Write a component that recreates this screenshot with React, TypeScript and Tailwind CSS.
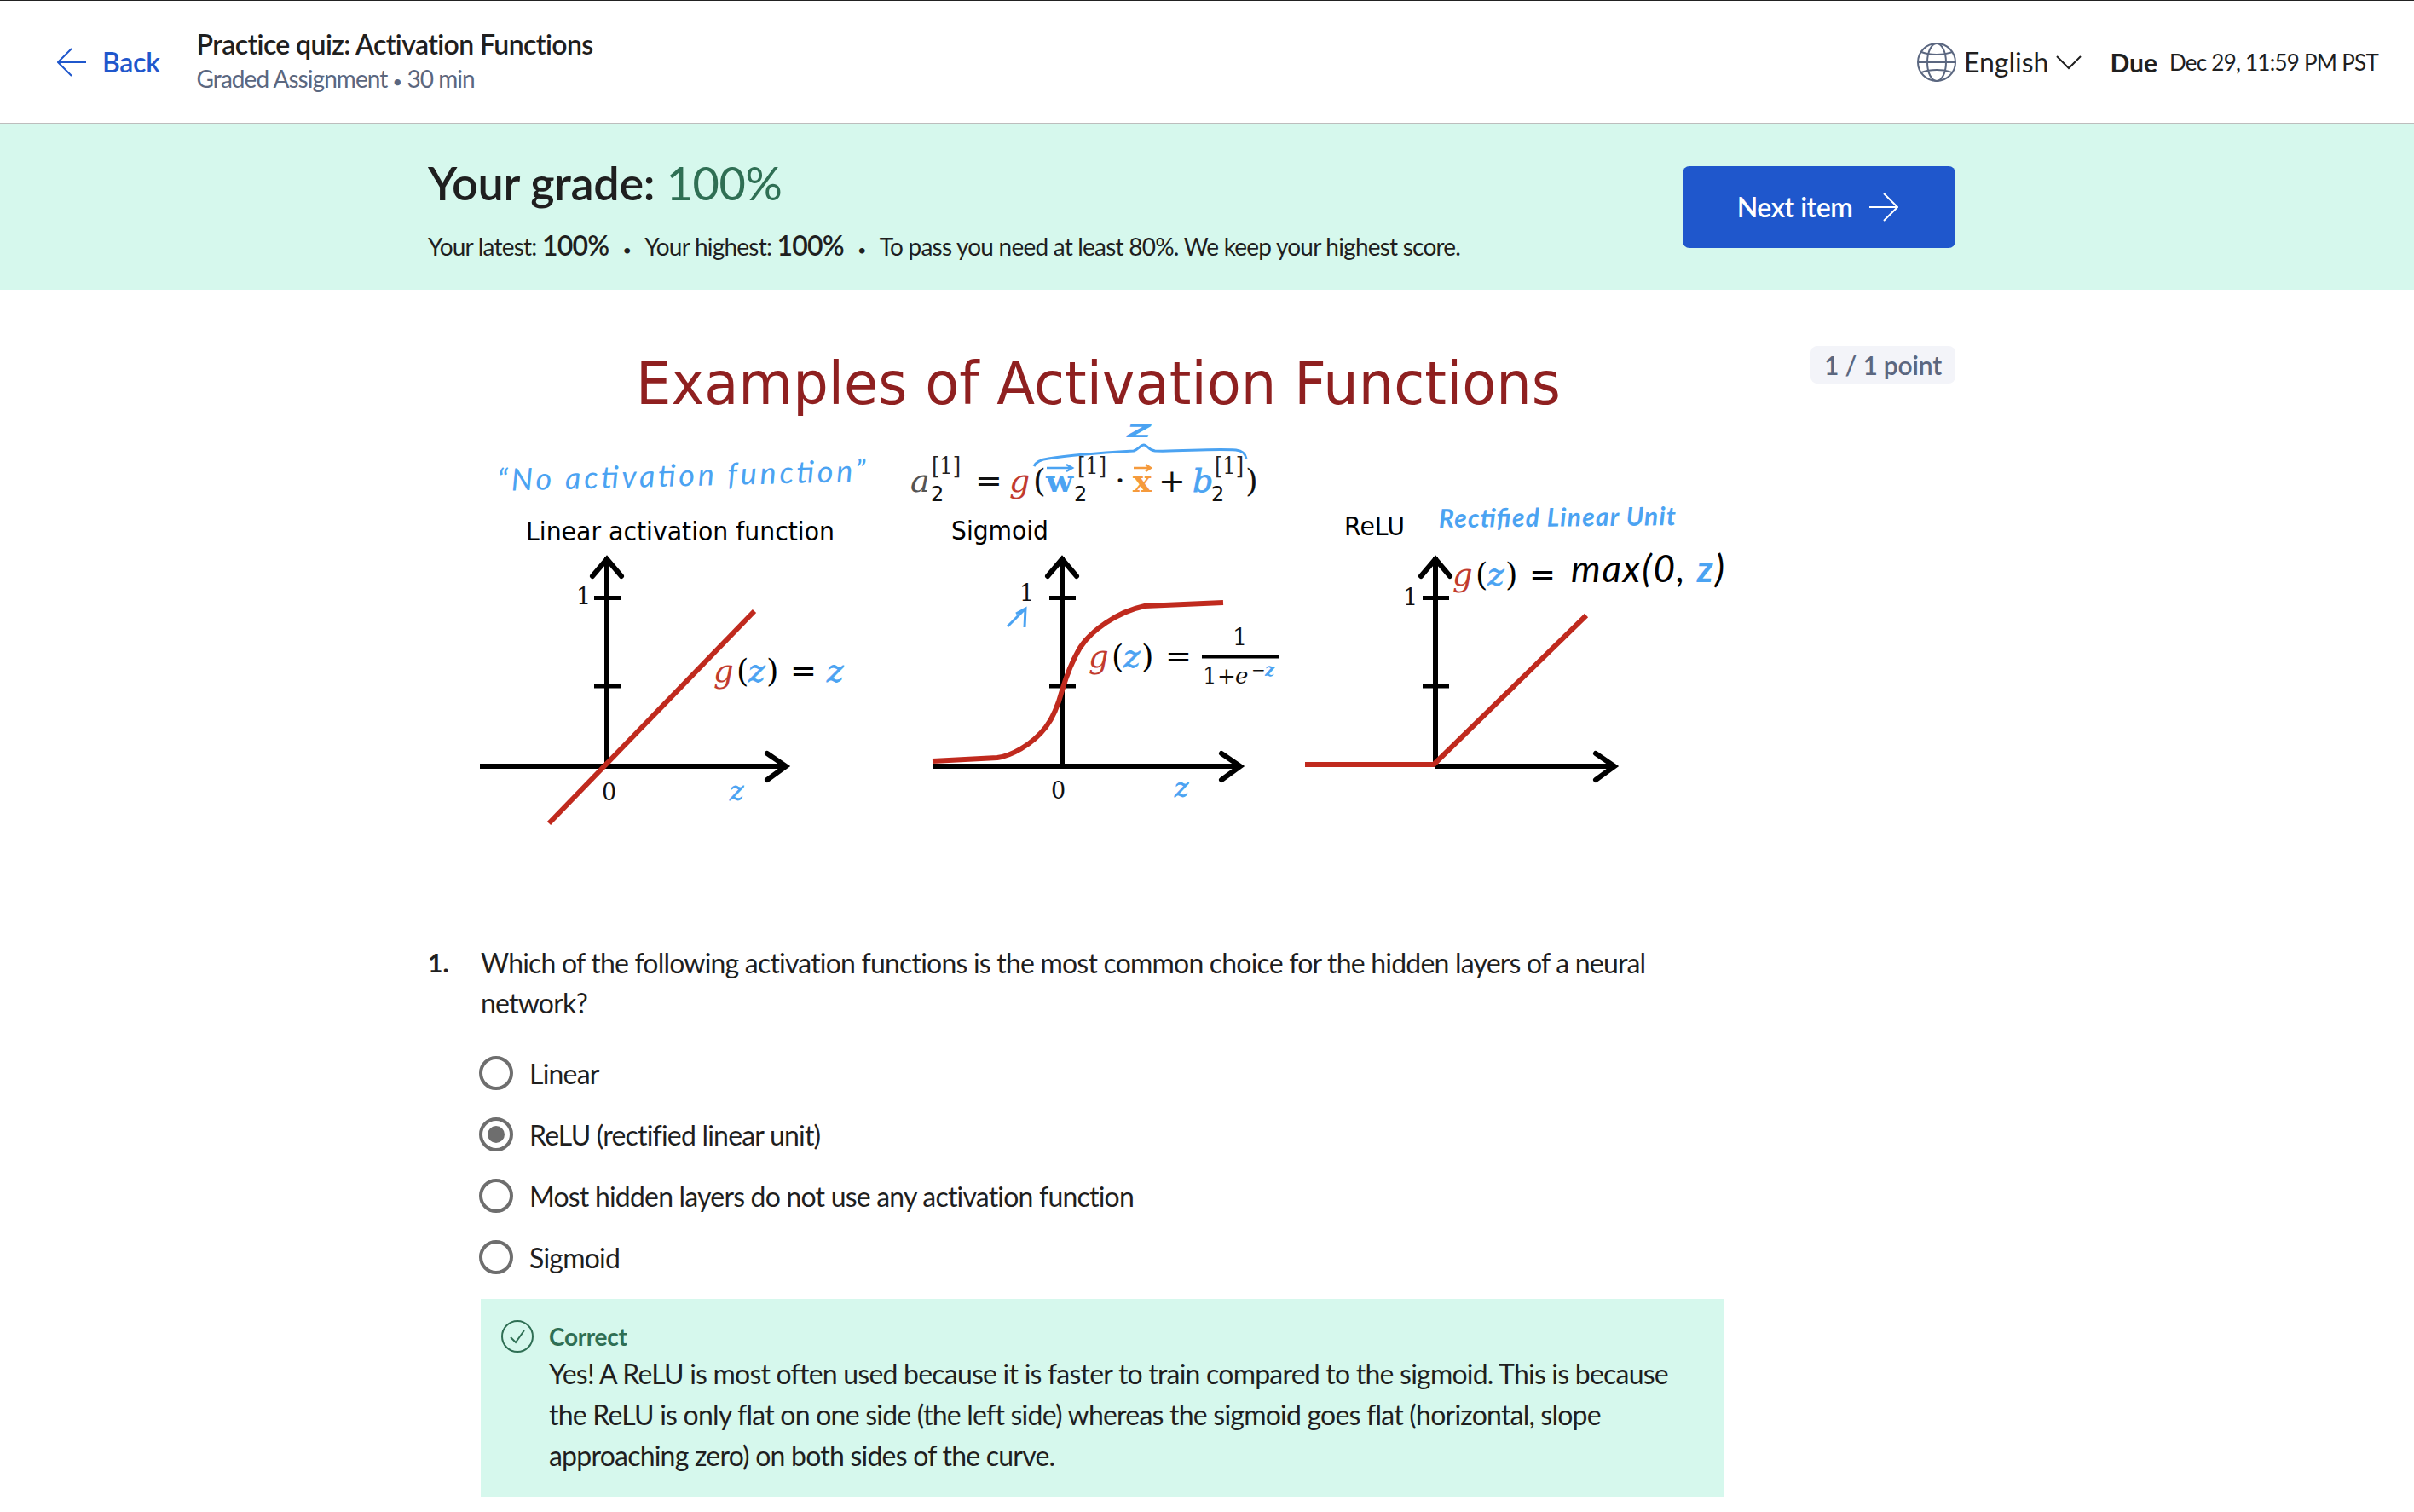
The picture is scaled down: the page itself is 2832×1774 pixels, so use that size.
const sans = "font-['Lato','Liberation_Sans',sans-serif]";
const mathFont = "font-['DejaVu_Serif',serif]";
const red = "italic fill-[#c23b2e]";
const blue = "italic fill-[#4ba3f2] stroke-[#4ba3f2] stroke-[0.8px]";

function Axes({ x }: { x: number }) {
  return (
    <g fill="none" stroke="#000" strokeWidth={6}>
      <path d={`M${x} 654V899`} />
      <path d={`M${x - 17} 676L${x} 656L${x + 17} 676`} strokeLinecap="round" strokeLinejoin="miter" />
      <path d={`M${x - 15} 701.5H${x + 16}M${x - 15} 805H${x + 16}`} strokeWidth={5} />
    </g>
  );
}

function HAxis({ from, to }: { from: number; to: number }) {
  return (
    <g fill="none" stroke="#000" strokeWidth={6}>
      <path d={`M${from} 899H${to - 3}`} />
      <path d={`M${to - 25} 884L${to - 3} 899L${to - 25} 915`} strokeLinecap="round" />
    </g>
  );
}

function Gz({ x, y }: { x: number; y: number }) {
  return (
    <text y={y} className={`${mathFont} text-[37px] fill-black`}>
      <tspan x={x} className={red}>g</tspan>
      <tspan x={x + 27}>(</tspan>
      <tspan x={x + 41} className={blue}>z</tspan>
      <tspan x={x + 62}>)</tspan>
      <tspan x={x + 90}>=</tspan>
    </text>
  );
}

function Figure() {
  const dj = "font-['DejaVu_Sans',sans-serif]";
  const hand = "font-['Lato',sans-serif] italic";
  const digit = `${mathFont} fill-[#111] text-[27px]`;
  const sup = `${mathFont} fill-[#222] text-[27px]`;
  const sub = `${dj} fill-[#111] text-[24px]`;
  const eq = `${mathFont} fill-[#111] text-[38px]`;
  return (
    <svg viewBox="502 406 1538 600" width={1538} height={600} className="block shrink-0">
      <text x={746} y={474} textLength={1085} lengthAdjust="spacingAndGlyphs" className={`${dj} fill-[#8f2020] text-[69px]`}>Examples of Activation Functions</text>

      {/* Chart 1 */}
      <text x={584} y={576} textLength={432} lengthAdjust="spacing" transform="rotate(-1.5 584 576)" className={`${hand} fill-[#4ba3f2] text-[36px]`}>“No activation function”</text>
      <text x={617} y={634} textLength={362} lengthAdjust="spacingAndGlyphs" className={`${dj} fill-black text-[31px]`}>Linear activation function</text>
      <Axes x={712} />
      <HAxis from={563} to={925} />
      <path d="M644 966L885 717" stroke="#c02a1e" strokeWidth={6} fill="none" />
      <text x={676} y={709} className={digit}>1</text>
      <text x={706} y={939} className={digit}>0</text>
      <text x={856} y={939} className={`${mathFont} ${blue} text-[31px]`}>z</text>
      <Gz x={837} y={800} />
      <text x={970} y={800} className={`${mathFont} ${blue} text-[37px]`}>z</text>

      {/* Formula */}
      <text x={1068} y={577} className={`${mathFont} italic fill-[#555] text-[38px]`}>a</text>
      <text x={1093} y={556} textLength={34} lengthAdjust="spacingAndGlyphs" className={sup}>[1]</text>
      <text x={1092} y={588} className={sub}>2</text>
      <text x={1144} y={577} className={eq}>=</text>
      <text x={1184} y={577} className={`${mathFont} ${red} text-[38px]`}>g</text>
      <text x={1212} y={577} className={eq}>(</text>
      <text x={1227} y={577} textLength={32} lengthAdjust="spacingAndGlyphs" className={`${mathFont} font-bold fill-[#4ba3f2] text-[36px]`}>w</text>
      <text x={1264} y={556} textLength={34} lengthAdjust="spacingAndGlyphs" className={sup}>[1]</text>
      <text x={1260} y={588} className={sub}>2</text>
      <text x={1308} y={577} className={eq}>·</text>
      <text x={1329} y={577} textLength={22} lengthAdjust="spacingAndGlyphs" className={`${mathFont} font-bold fill-[#f59a3c] text-[36px]`}>x</text>
      <text x={1359} y={577} className={eq}>+</text>
      <text x={1399} y={577} className={`${mathFont} ${blue} text-[38px]`}>b</text>
      <text x={1425} y={556} textLength={34} lengthAdjust="spacingAndGlyphs" className={sup}>[1]</text>
      <text x={1421} y={588} className={sub}>2</text>
      <text x={1461} y={577} className={eq}>)</text>
      <path d="M1228 549H1258M1251 545L1258 549L1251 553" fill="none" stroke="#4ba3f2" strokeWidth={2.5} />
      <path d="M1330 549H1350M1344 545L1350 549L1344 553" fill="none" stroke="#f59a3c" strokeWidth={2.5} />
      <path d="M1213 547C1216 541 1222 539 1230 538C1260 533 1295 531 1330 529C1336 527 1338 522 1342 522C1346 522 1347 528 1355 529C1385 530 1420 526 1450 528C1458 529 1461 532 1462 538" fill="none" stroke="#4ba3f2" strokeWidth={3} />
      <text x={1322} y={513} textLength={29} lengthAdjust="spacingAndGlyphs" className={`${hand} font-bold fill-[#4ba3f2] text-[28px]`}>z</text>

      {/* Chart 2 */}
      <text x={1116} y={633} textLength={114} lengthAdjust="spacingAndGlyphs" className={`${dj} fill-black text-[31px]`}>Sigmoid</text>
      <Axes x={1246} />
      <HAxis from={1094} to={1458} />
      <path d="M1094 893L1170 889C1185 887 1210 875 1227 853C1237 840 1242 825 1246 810C1252 790 1258 775 1267 760C1280 740 1310 718 1343 711L1435 707" fill="none" stroke="#c02a1e" strokeWidth={6} />
      <text x={1196} y={705} className={digit}>1</text>
      <path d="M1182 735L1203 714M1192 720L1203 714L1202 736" fill="none" stroke="#4ba3f2" strokeWidth={3} />
      <text x={1233} y={937} className={digit}>0</text>
      <text x={1378} y={935} className={`${mathFont} ${blue} text-[31px]`}>z</text>
      <Gz x={1277} y={783} />
      <path d="M1410 770.5H1501" stroke="#000" strokeWidth={4} />
      <text x={1446} y={757} className={digit}>1</text>
      <text y={802} className={`${mathFont} fill-[#111] text-[26px]`}>
        <tspan x={1411}>1</tspan>
        <tspan x={1428}>+</tspan>
        <tspan x={1449} className="italic">e</tspan>
      </text>
      <text y={793} className={`${mathFont} fill-[#111] text-[20px]`}>
        <tspan x={1468}>−</tspan>
        <tspan x={1484} className="italic font-bold fill-[#4ba3f2]">z</tspan>
      </text>

      {/* Chart 3 */}
      <text x={1577} y={628} textLength={71} lengthAdjust="spacingAndGlyphs" className={`${dj} fill-black text-[31px]`}>ReLU</text>
      <text x={1688} y={619} textLength={278} lengthAdjust="spacing" transform="rotate(-0.6 1688 619)" className={`${hand} font-bold fill-[#4ba3f2] text-[30px]`}>Rectified Linear Unit</text>
      <Axes x={1684} />
      <HAxis from={1684} to={1897} />
      <path d="M1531 897H1682L1861 722" fill="none" stroke="#c02a1e" strokeWidth={6} />
      <text x={1646} y={710} className={digit}>1</text>
      <Gz x={1704} y={687} />
      <text x={1843} y={683} textLength={180} lengthAdjust="spacing" className={`${hand} fill-black text-[44px]`}>
        max(0, <tspan className="font-bold fill-[#4ba3f2]">z</tspan>)
      </text>
    </svg>
  );
}

function Radio({ label, checked }: { label: string; checked?: boolean }) {
  return (
    <div className="-ml-[2px] flex h-[72px] items-center gap-[19px]">
      <div className="flex size-10 items-center justify-center rounded-full border-4 border-[#6e6e6e] bg-white">
        {checked && <div className="size-[20px] rounded-full bg-[#6e6e6e]" />}
      </div>
      <span className="text-[32px] leading-[47px] tracking-[-0.8px] text-[#1f1f1f]">{label}</span>
    </div>
  );
}

export default function App() {
  return (
    <div className={`${sans} min-h-[1774px] bg-white text-[#1f1f1f]`}>
      <header className="flex h-[146px] items-center justify-between border-t border-b-2 border-t-[#222] border-b-[#bdbdbd] pl-[67px] pr-[42px]">
        <div className="flex items-center">
          <div className="flex items-center gap-[19px] text-[#1f57cc]">
            <svg width={34} height={34} viewBox="0 0 34 34" fill="none" stroke="currentColor" strokeWidth={2}>
              <path d="M1 17H34M17 1L1 17L17 33" />
            </svg>
            <span className="text-[32px] font-semibold leading-none tracking-[-0.3px]">Back</span>
          </div>
          <div className="ml-[43px]">
            <div className="text-[32px] font-semibold leading-[42px] tracking-[-0.6px] text-[#1f1f1f]">Practice quiz: Activation Functions</div>
            <div className="text-[28px] leading-[38px] tracking-[-0.95px] text-[#5b6780]">
              Graded Assignment <span className="text-[20px]">•</span> 30 min
            </div>
          </div>
        </div>
        <div className="flex items-center">
          <svg width={46} height={46} viewBox="0 0 46 46" fill="none" stroke="#5b6780" strokeWidth={2}>
            <circle cx={23} cy={23} r={22} />
            <ellipse cx={23} cy={23} rx={11} ry={22} />
            <path d="M1 23H45M5 11C15 15 31 15 41 11M5 35C15 31 31 31 41 35" />
          </svg>
          <span className="ml-[9px] text-[32px] leading-none">English</span>
          <svg width={30} height={18} viewBox="0 0 30 18" fill="none" stroke="#1f1f1f" strokeWidth={2} className="ml-[9px]">
            <path d="M1 2L15 16L29 2" />
          </svg>
          <span className="ml-[33px] text-[30px] font-bold leading-none">Due</span>
          <span className="ml-[14px] text-[26px] leading-none tracking-[-0.75px]">Dec 29, 11:59 PM PST</span>
        </div>
      </header>

      <section className="h-[194px] bg-[#d6f8ed] pl-[502px]">
        <div className="flex w-[1792px] items-start justify-between">
          <div className="pt-[37px]">
            <h1 className="text-[54px] font-semibold leading-[64px] tracking-[-0.3px] text-[#1f1f1f]">
              Your grade: <span className="font-normal text-[#2f6f54]">100%</span>
            </h1>
            <p className="mt-[21px] text-[28px] leading-[40px] tracking-[-0.78px] text-[#1f1f1f]">
              Your latest: <span className="text-[32px] font-semibold">100%</span>
              <span className="mx-[16px] text-[18px]">•</span>
              Your highest: <span className="text-[32px] font-semibold">100%</span>
              <span className="mx-[16px] text-[18px]">•</span>
              To pass you need at least 80%. We keep your highest score.
            </p>
          </div>
          <button className="mt-[49px] flex h-[96px] w-[320px] items-center justify-center gap-[20px] rounded-lg bg-[#1f57cc] pr-[3px] text-[32px] font-semibold tracking-[-0.5px] text-white">
            Next item
            <svg width={34} height={34} viewBox="0 0 34 34" fill="none" stroke="currentColor" strokeWidth={2}>
              <path d="M0 17H33M17 1L33 17L17 33" />
            </svg>
          </button>
        </div>
      </section>

      <main className="w-[2294px] pl-[502px] pt-[66px]">
        <div className="flex items-start justify-between">
          <Figure />
          <div className="flex h-[44px] w-[170px] items-center justify-center rounded-lg bg-[#f3f4f9] text-[30px] font-semibold tracking-[-0.2px] text-[#5b6780]">1 / 1 point</div>
        </div>

        <div className="mt-[100px] flex">
          <div className="w-[62px] shrink-0 text-[30px] font-bold leading-[47px]">1.</div>
          <div className="w-[1459px]">
            <p className="text-[32px] leading-[47px] tracking-[-0.8px] text-[#1f1f1f]">
              Which of the following activation functions is the most common choice for the hidden layers of a neural network?
            </p>
            <div className="mt-[23px]">
              <Radio label="Linear" />
              <Radio label="ReLU (rectified linear unit)" checked />
              <Radio label="Most hidden layers do not use any activation function" />
              <Radio label="Sigmoid" />
            </div>
            <div className="mt-[13px] flex h-[232px] bg-[#d6f8ed] pl-[23px] pr-[30px] pt-[24px]">
              <svg width={40} height={40} viewBox="0 0 40 40" fill="none" stroke="#2f6f54" strokeWidth={2} className="shrink-0">
                <circle cx={20} cy={20} r={18} />
                <path d="M12 21L18 27L28 13" />
              </svg>
              <div className="ml-[17px]">
                <div className="text-[28px] font-bold leading-[40px] tracking-[-0.3px] text-[#2f6f54]">Correct</div>
                <p className="text-[32px] leading-[48px] tracking-[-0.78px] text-[#1f1f1f]">
                  Yes! A ReLU is most often used because it is faster to train compared to the sigmoid. This is because the ReLU is only flat on one side (the left side) whereas the sigmoid goes flat (horizontal, slope approaching zero) on both sides of the curve.
                </p>
              </div>
            </div>
          </div>
        </div>
      </main>
    </div>
  );
}
